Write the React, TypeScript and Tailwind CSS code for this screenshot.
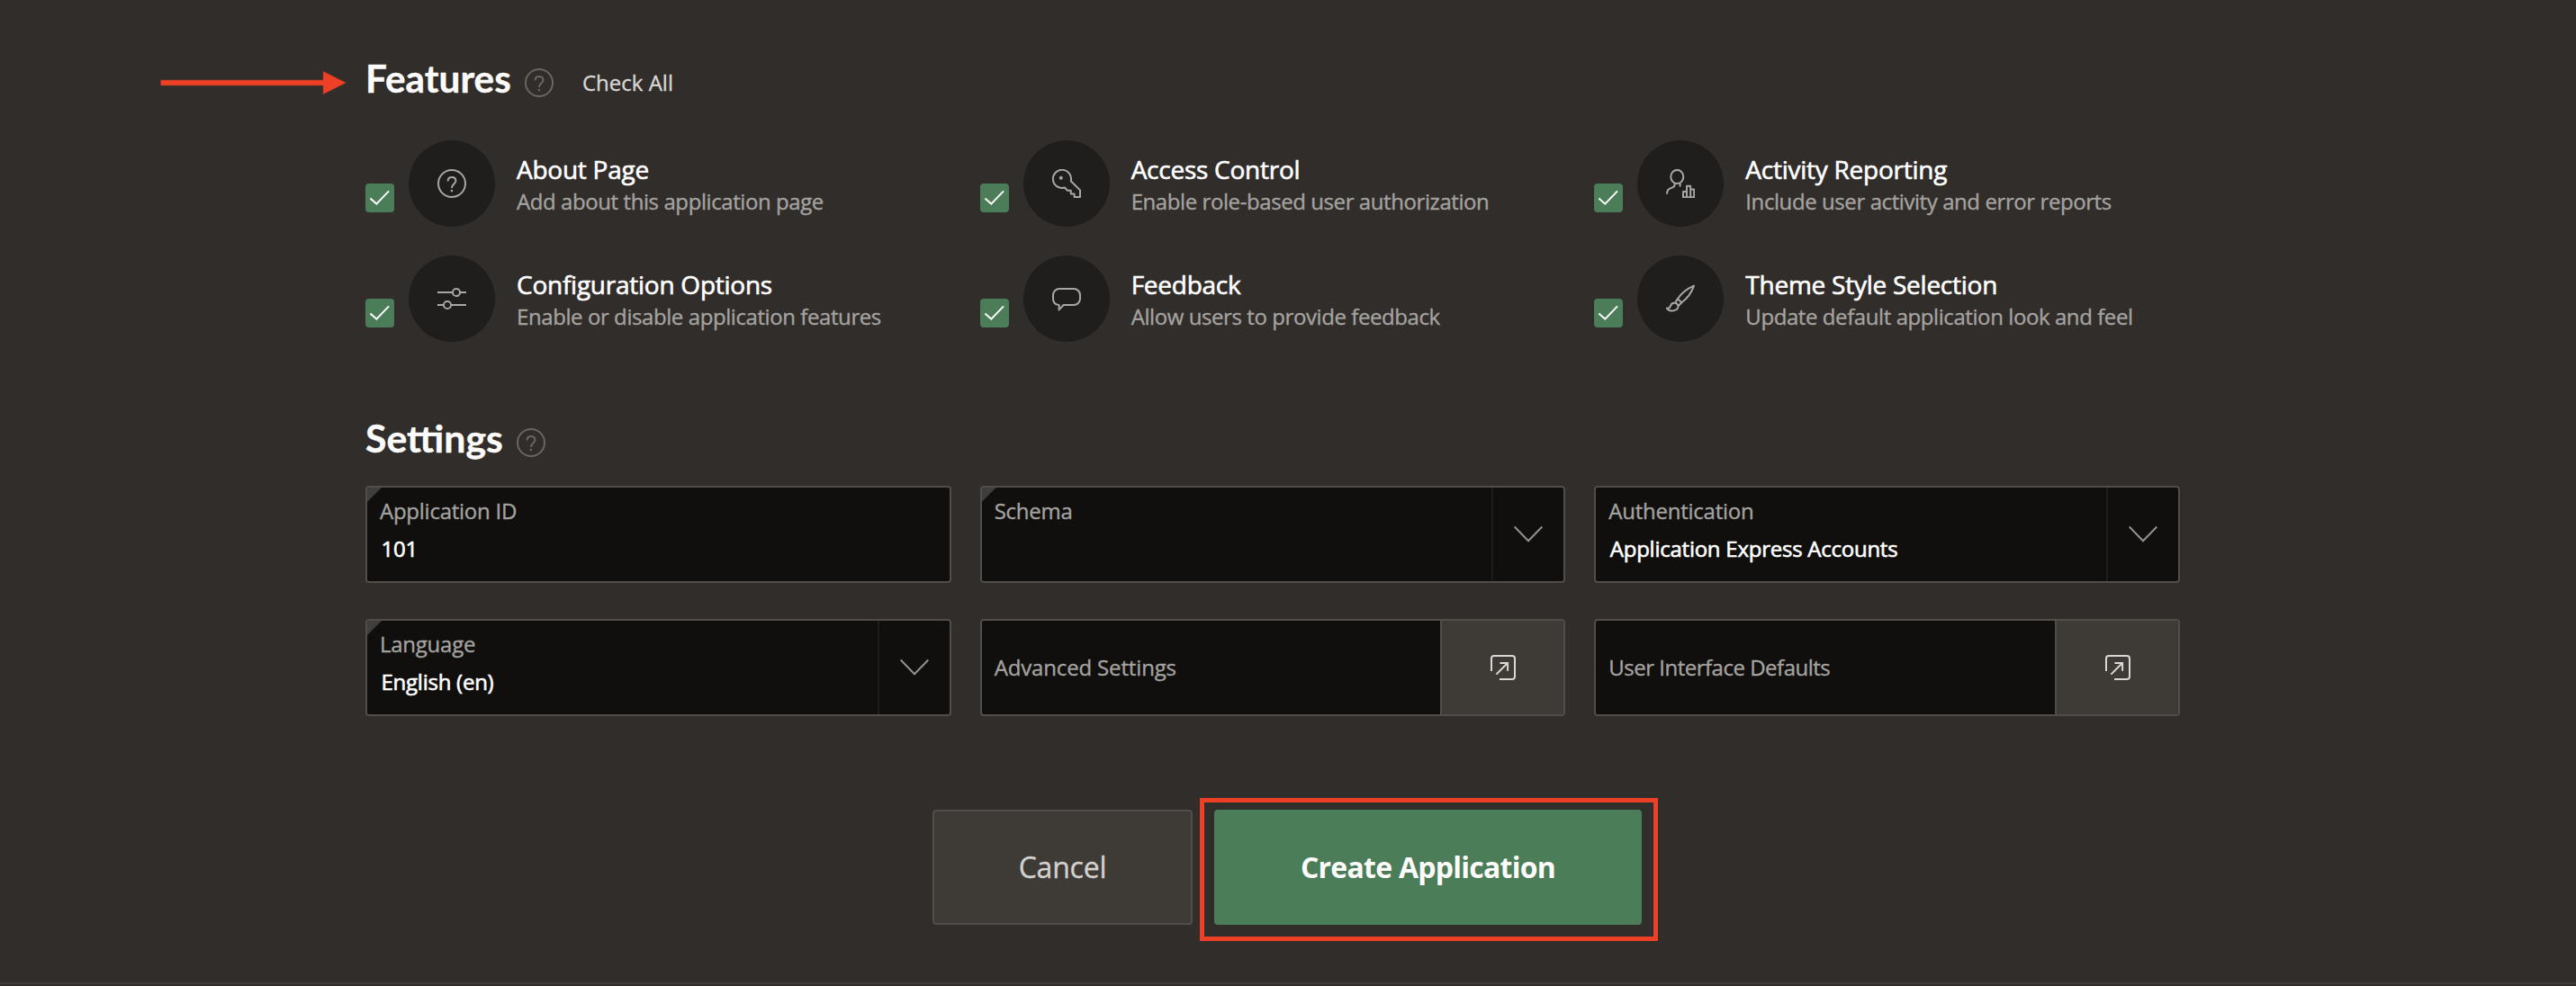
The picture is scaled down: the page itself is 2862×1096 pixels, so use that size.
import type { ReactNode } from "react";

function Icon({ children, className = "size-8" }: { children: ReactNode; className?: string }) {
  return (
    <svg
      viewBox="0 0 32 32"
      fill="none"
      stroke="currentColor"
      strokeWidth="2"
      strokeLinejoin="round"
      className={className}
    >
      {children}
    </svg>
  );
}

function HelpIcon() {
  return (
    <Icon>
      <circle cx="16" cy="16" r="15" />
      <path d="M11.6 13.4C11.6 10.7 13.5 9 16 9C18.6 9 20.4 10.6 20.4 13C20.4 16.4 15.9 16.8 15.9 21" />
      <circle cx="15.9" cy="24.1" r="1.3" fill="currentColor" stroke="none" />
    </Icon>
  );
}

function KeyIcon() {
  return (
    <Icon>
      <path d="M20.8 13.2L31 23.4V31H24.6V27.4H20.8V23.8H17L14 20.5A10.1 10.1 0 1 1 20.8 13.2Z" />
      <circle cx="9.8" cy="9.8" r="2" fill="currentColor" stroke="none" />
    </Icon>
  );
}

function UserChartIcon() {
  return (
    <Icon>
      <ellipse cx="12.3" cy="8.5" rx="7" ry="7.6" />
      <path d="M9.6 15.8V17.4C9.6 19.3 8.4 19.9 6.6 20.6L4.2 21.6C1.9 22.6 1 24.2 1 27.8M15.6 15.8V19.6" />
      <path d="M19 25H23V31.2H19ZM23 18.8H27.2V31.2H23ZM27.2 22.6H31.2V31.2H27.2Z" />
    </Icon>
  );
}

function SlidersIcon() {
  return (
    <Icon>
      <circle cx="21" cy="9" r="4.1" />
      <circle cx="11" cy="23" r="4.1" />
      <path d="M0 9H17M25 9H32M0 23H7M15 23H32" />
    </Icon>
  );
}

function SpeechIcon() {
  return (
    <Icon>
      <path d="M8 5H24A7 7 0 0 1 31 12V16A7 7 0 0 1 24 23H12.6L7.6 28.4V23C3.6 22.6 1 20 1 16V12A7 7 0 0 1 8 5Z" />
    </Icon>
  );
}

function BrushIcon() {
  return (
    <Icon>
      <path d="M31 1.6C24 4.6 16.5 10.8 12.8 16.2L17.4 20.2C22.8 16.4 28.2 9.4 31 1.6Z" />
      <path d="M12.8 16.2L10 20.8M17.4 20.2L13.4 24.2M10 20.8C12 21.2 13.2 22.4 13.4 24.2" />
      <path d="M10 20.8C7.4 20.4 5.6 21.8 5 24C4.4 26.1 3 27 .9 26.6C2 28.8 4.4 29.6 7 29.4C11 29.2 13.8 27.6 13.4 24.2" />
    </Icon>
  );
}

function ExternalIcon() {
  return (
    <svg viewBox="0 0 28 28" fill="none" stroke="currentColor" strokeWidth="2" className="size-7">
      <path d="M1 18V4A3 3 0 0 1 4 1H24A3 3 0 0 1 27 4V24A3 3 0 0 1 24 27H10" />
      <path d="M6.4 21.6L19.2 8.8M10.4 8.9H19.1V17.8" />
    </svg>
  );
}

function ChevronIcon() {
  return (
    <svg viewBox="0 0 32 20" fill="none" stroke="currentColor" strokeWidth="2" className="h-5 w-8">
      <path d="M.7 1.5L16 17.3L31.3 1.5" />
    </svg>
  );
}

function SectionTitle({ title, className }: { title: string; className: string }) {
  return (
    <>
      <h2
        className={`${className} -mt-[5px] font-['Lato',sans-serif] leading-8 font-bold whitespace-nowrap text-[#fcfbfa] [-webkit-text-stroke:0.4px]`}
      >
        {title}
      </h2>
      <span className="text-[#6a6662]">
        <HelpIcon />
      </span>
    </>
  );
}

function Feature({ icon, title, text }: { icon: ReactNode; title: string; text: string }) {
  return (
    <div className="flex h-24">
      <span className="mt-12 mr-4 flex size-8 shrink-0 items-center justify-center rounded-[4px] bg-[#4b7d58] text-white">
        <Icon>
          <path d="M5.4 16.6L12.3 22.6L26 8.4" strokeLinejoin="miter" />
        </Icon>
      </span>
      <span className="mr-6 flex size-24 shrink-0 items-center justify-center rounded-full bg-[#201e1c] text-[#a9a7a5]">
        {icon}
      </span>
      <div className="flex flex-col justify-center whitespace-nowrap">
        <h3 className="text-[28px] leading-10 tracking-[-0.25px] text-white [-webkit-text-stroke:0.6px]">{title}</h3>
        <p className="text-2xl leading-8 tracking-[-0.42px] text-[#a5a3a0] [-webkit-text-stroke:0.35px]">{text}</p>
      </div>
    </div>
  );
}

const boxClass = "relative flex h-[108px] overflow-hidden rounded-[4px] border-2 border-[#524d49] bg-[#100f0d]";

function Field({
  label,
  value,
  required,
  select,
}: {
  label: string;
  value?: string;
  required?: boolean;
  select?: boolean;
}) {
  return (
    <div className={boxClass}>
      {required && (
        <span className="absolute top-0 left-0 size-4 bg-[#403e3c] [clip-path:polygon(0_0,100%_0,0_100%)]" />
      )}
      <div className="flex grow flex-col gap-2.5 pt-2.5 pl-3.5 text-2xl leading-8 tracking-[-0.25px]">
        <span className="text-[#a5a3a0] [-webkit-text-stroke:0.35px]">{label}</span>
        <span className="pl-[1.5px] text-white [-webkit-text-stroke:0.6px]">{value}</span>
      </div>
      {select && (
        <span className="flex w-20 items-center justify-center border-l-2 border-[#1e1d1b] text-[#939190]">
          <ChevronIcon />
        </span>
      )}
    </div>
  );
}

function LinkField({ label, className }: { label: string; className: string }) {
  return (
    <div className={boxClass}>
      <span
        className={`${className} flex grow items-center pl-3.5 text-2xl leading-8 text-[#a5a3a0] [-webkit-text-stroke:0.35px]`}
      >
        {label}
      </span>
      <span className="flex w-[137px] items-center justify-center border-l-2 border-[#524d49] bg-[#3e3a35] text-[#dad8d5]">
        <ExternalIcon />
      </span>
    </div>
  );
}

export default function App() {
  return (
    <div className="relative h-[1096px] w-[2862px] overflow-hidden bg-[#312d2a] pt-[76px] font-['Open_Sans',sans-serif]">
      <svg viewBox="0 0 208 28" className="absolute top-[78px] left-[178px] h-7 w-52">
        <path
          d="M.5 11H181V1.2L206.5 14L181 26.8V17H.5Z"
          fill="#ee4026"
          stroke="#8f3526"
          strokeWidth=".6"
        />
      </svg>

      <main className="ml-[406px] w-[2016px]">
        <header className="flex h-8">
          <SectionTitle title="Features" className="w-[177px] text-[42.3px]" />
          <button className="ml-8 text-2xl leading-8 text-[#d8d6d3] [-webkit-text-stroke:0.35px]">Check All</button>
        </header>

        <section className="mt-12 grid grid-cols-3 gap-8">
          <Feature icon={<HelpIcon />} title="About Page" text="Add about this application page" />
          <Feature icon={<KeyIcon />} title="Access Control" text="Enable role-based user authorization" />
          <Feature icon={<UserChartIcon />} title="Activity Reporting" text="Include user activity and error reports" />
          <Feature icon={<SlidersIcon />} title="Configuration Options" text="Enable or disable application features" />
          <Feature icon={<SpeechIcon />} title="Feedback" text="Allow users to provide feedback" />
          <Feature icon={<BrushIcon />} title="Theme Style Selection" text="Update default application look and feel" />
        </section>

        <header className="mt-24 flex h-8">
          <SectionTitle title="Settings" className="w-[168px] text-[42.8px]" />
        </header>

        <section className="mt-8 grid grid-cols-3 gap-x-8 gap-y-10">
          <Field label="Application ID" value="101" required />
          <Field label="Schema" required select />
          <Field label="Authentication" value="Application Express Accounts" select />
          <Field label="Language" value="English (en)" required select />
          <LinkField label="Advanced Settings" className="tracking-[-0.15px]" />
          <LinkField label="User Interface Defaults" className="tracking-[-0.5px]" />
        </section>

        <footer className="mt-[104px] ml-[630px] flex gap-6">
          <button className="h-32 w-[289px] rounded-[4px] border-2 border-[#524d49] bg-[#3e3a35] text-[32px] leading-10 tracking-[-0.2px] text-[#d3d1ce] [-webkit-text-stroke:0.35px]">
            Cancel
          </button>
          <div className="relative">
            <button className="h-32 w-[475px] rounded-[4px] bg-[#4b7d58] text-[32px] leading-10 font-bold tracking-[-0.75px] text-[#fcfbfa]">
              Create Application
            </button>
            <span className="absolute -top-[13px] -left-[16px] h-[159px] w-[509px] border-[5px] border-[#ee4026]" />
          </div>
        </footer>
      </main>

      <div className="mt-16 h-0.5 bg-[#3f3b38]" />
    </div>
  );
}
